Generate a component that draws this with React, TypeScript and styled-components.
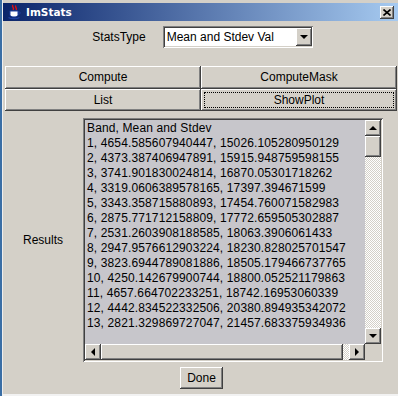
import React, { FC } from 'react';
import styled, { createGlobalStyle, css } from 'styled-components';

const GlobalStyle = createGlobalStyle`
  html, body {
    margin: 0;
    padding: 0;
  }
  body {
    background: #3a6ea5;
    font-family: 'Liberation Sans', Arial, sans-serif;
  }
`;

const raised = css`
  background: #d4d0c8;
  box-shadow: inset -1px -1px #404040, inset 1px 1px #ffffff,
    inset -2px -2px #808080, inset 2px 2px #d4d0c8;
`;

const sunken = css`
  box-shadow: inset 1px 1px #808080, inset -1px -1px #ffffff,
    inset 2px 2px #404040, inset -2px -2px #d4d0c8;
`;

const Window = styled.div`
  margin-left: 2px;
  width: 396px;
  height: 396px;
  box-sizing: border-box;
  padding-top: 3px;
  border-left: 1px solid #eeeeee;
  border-bottom: 2px solid #f2f2f2;
  background: #d4d0c8;
  display: flex;
  flex-direction: column;
`;

const TitleBar = styled.div`
  height: 18px;
  display: flex;
  align-items: center;
  padding: 0 4px;
  background: linear-gradient(to right, #0a246a, #a6caf0);
`;

const TitleText = styled.span`
  margin-left: 3px;
  flex: 1;
  font-family: 'DejaVu Sans', Tahoma, sans-serif;
  font-weight: 700;
  font-size: 10.5px;
  color: #ffffff;
`;

const CloseButton = styled.div`
  ${raised};
  width: 14px;
  height: 13px;
  display: flex;
  align-items: center;
  justify-content: center;
`;

const Content = styled.div`
  flex: 1;
  display: flex;
  flex-direction: column;
`;

const StatsRow = styled.div`
  margin-top: 5px;
  padding-left: 4px;
  display: flex;
  justify-content: center;
  align-items: center;
  gap: 17px;
`;

const Label = styled.span`
  font-size: 12px;
  color: #000000;
`;

const Combo = styled.div`
  ${sunken};
  width: 150px;
  height: 22px;
  box-sizing: border-box;
  padding: 2px 1px 2px 4px;
  background: #ffffff;
  display: flex;
  align-items: center;
  font-size: 12px;
  color: #000000;
`;

const ComboText = styled.span`
  flex: 1;
`;

const ComboArrow = styled.div`
  ${raised};
  width: 16px;
  height: 18px;
  display: flex;
  align-items: center;
  justify-content: center;
`;

const ButtonGrid = styled.div`
  margin: 18px 1px 0 2px;
  display: grid;
  grid-template-columns: 1fr 1fr;
  grid-auto-rows: 22.5px;
`;

const ActionButton = styled.button<{ $focused?: boolean }>`
  ${raised};
  border: none;
  padding: 0;
  font-family: 'Liberation Sans', Arial, sans-serif;
  font-size: 12px;
  color: #000000;
  ${({ $focused }) =>
    $focused &&
    css`
      outline: 1px dotted #000000;
      outline-offset: -4px;
    `}
`;

const ResultsRow = styled.div`
  margin-top: 7px;
  display: flex;
  height: 244px;
`;

const ResultsLabel = styled.div`
  width: 80px;
  display: flex;
  align-items: center;
  justify-content: center;
  font-size: 12px;
`;

const ScrollPane = styled.div`
  ${sunken};
  width: 300px;
  box-sizing: border-box;
  padding: 2px;
  display: grid;
  grid-template-columns: 1fr 16px;
  grid-template-rows: 1fr 16px;
`;

const Viewport = styled.div`
  background: #c7c6cb;
  padding: 1px 0 0 2px;
  overflow: hidden;
  white-space: pre;
  font-size: 12px;
  line-height: 15px;
  letter-spacing: 0.13px;
  color: #000000;
`;

const Corner = styled.div`
  background: #d4d0c8;
`;

const ScrollBar = styled.div<{ $vertical?: boolean }>`
  display: flex;
  flex-direction: ${({ $vertical }) => ($vertical ? 'column' : 'row')};
`;

const ScrollArrow = styled.div`
  ${raised};
  flex: 0 0 16px;
  display: flex;
  align-items: center;
  justify-content: center;
`;

const Thumb = styled.div<{ $size: number }>`
  ${raised};
  flex: 0 0 ${({ $size }) => $size}px;
`;

const Track = styled.div`
  flex: 1;
  background-color: #d4d0c8;
  background-image: conic-gradient(#ffffff 25%, #d4d0c8 0 50%, #ffffff 0 75%, #d4d0c8 0);
  background-size: 2px 2px;
`;

type Dir = 'up' | 'down' | 'left' | 'right';

const Triangle = styled.span<{ $dir: Dir }>`
  width: 0;
  height: 0;
  ${({ $dir }) => {
    if ($dir === 'up')
      return 'border-left: 4px solid transparent; border-right: 4px solid transparent; border-bottom: 4px solid #000;';
    if ($dir === 'down')
      return 'border-left: 4px solid transparent; border-right: 4px solid transparent; border-top: 4px solid #000;';
    if ($dir === 'left')
      return 'border-top: 4px solid transparent; border-bottom: 4px solid transparent; border-right: 4px solid #000;';
    return 'border-top: 4px solid transparent; border-bottom: 4px solid transparent; border-left: 4px solid #000;';
  }}
`;

const DoneButton = styled(ActionButton)`
  align-self: center;
  margin: 5px 0 0 2px;
  width: 43px;
  height: 22px;
`;

const JavaIcon: FC = () => (
  <svg width="16" height="16" viewBox="0 0 16 16">
    <path d="M6 1c-2 2 2 2.5 0 5M9 1.5c-2 2 2 2.5 0 4.5" stroke="#e01010" strokeWidth="1.4" fill="none" />
    <path d="M3 7h8v3.5c0 1.5-1.5 2.5-4 2.5s-4-1-4-2.5z" fill="#ffffff" stroke="#2040a0" strokeWidth="1" />
    <path d="M11 8h1.5c1 0 1 2-0.5 2.2H11" fill="none" stroke="#2040a0" strokeWidth="1" />
    <path d="M1.5 13.5c2 1.5 9 1.5 11 0" fill="none" stroke="#2040a0" strokeWidth="1.2" />
  </svg>
);

const CloseGlyph: FC = () => (
  <svg width="8" height="7" viewBox="0 0 8 7">
    <path d="M0.5 0.5L7.5 6.5M7.5 0.5L0.5 6.5" stroke="#000" strokeWidth="1.6" />
  </svg>
);

const lines = [
  'Band, Mean and Stdev',
  '1, 4654.585607940447, 15026.105280950129',
  '2, 4373.387406947891, 15915.948759598155',
  '3, 3741.901830024814, 16870.05301718262',
  '4, 3319.0606389578165, 17397.394671599',
  '5, 3343.358715880893, 17454.760071582983',
  '6, 2875.771712158809, 17772.659505302887',
  '7, 2531.2603908188585, 18063.3906061433',
  '8, 2947.9576612903224, 18230.828025701547',
  '9, 3823.6944789081886, 18505.179466737765',
  '10, 4250.142679900744, 18800.052521179863',
  '11, 4657.664702233251, 18742.16953060339',
  '12, 4442.834522332506, 20380.894935342072',
  '13, 2821.329869727047, 21457.683375934936',
];

const App: FC = () => (
  <>
    <GlobalStyle />
    <Window>
      <TitleBar>
        <JavaIcon />
        <TitleText>ImStats</TitleText>
        <CloseButton>
          <CloseGlyph />
        </CloseButton>
      </TitleBar>
      <Content>
        <StatsRow>
          <Label>StatsType</Label>
          <Combo>
            <ComboText>Mean and Stdev Val</ComboText>
            <ComboArrow>
              <Triangle $dir="down" />
            </ComboArrow>
          </Combo>
        </StatsRow>
        <ButtonGrid>
          <ActionButton>Compute</ActionButton>
          <ActionButton>ComputeMask</ActionButton>
          <ActionButton>List</ActionButton>
          <ActionButton $focused>ShowPlot</ActionButton>
        </ButtonGrid>
        <ResultsRow>
          <ResultsLabel>Results</ResultsLabel>
          <ScrollPane>
            <Viewport>{lines.join('\n')}</Viewport>
            <ScrollBar $vertical>
              <ScrollArrow>
                <Triangle $dir="up" />
              </ScrollArrow>
              <Thumb $size={21} />
              <Track />
              <ScrollArrow>
                <Triangle $dir="down" />
              </ScrollArrow>
            </ScrollBar>
            <ScrollBar>
              <ScrollArrow>
                <Triangle $dir="left" />
              </ScrollArrow>
              <Thumb $size={242} />
              <Track />
              <ScrollArrow>
                <Triangle $dir="right" />
              </ScrollArrow>
            </ScrollBar>
            <Corner />
          </ScrollPane>
        </ResultsRow>
        <DoneButton>Done</DoneButton>
      </Content>
    </Window>
  </>
);

export default App;
